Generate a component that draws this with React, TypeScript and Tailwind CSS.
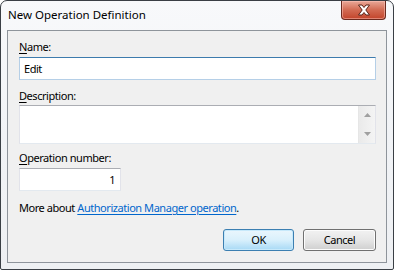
import React from "react";

const font = { fontFamily: '"Noto Sans", "Liberation Sans", sans-serif' };

function CloseGlyph() {
  return (
    <svg width="14" height="12" viewBox="0 0 14 12">
      <path
        d="M1.5 1 H5 L7 3.5 L9 1 H12.5 L8.8 6 L12.5 11 H9 L7 8.5 L5 11 H1.5 L5.2 6 Z"
        fill="#ffffff"
        stroke="#5a2418"
        strokeWidth="1"
        strokeLinejoin="round"
      />
    </svg>
  );
}

export default function App() {
  return (
    <div className="w-[394px] h-[270px] bg-white" style={font}>
      <div className="relative w-[394px] h-[270px] border border-[#3a3f45] rounded-t-[7px] rounded-b-[2px] bg-gradient-to-b from-[#f8f9fb] via-[#f1f3f6] to-[#eef0f3] flex flex-col text-[11px] tracking-[-0.45px] text-black">
        <div className="h-[29px] flex items-start pl-[7px] pt-[6px] text-[11.5px] tracking-normal leading-[16px] text-[#000]">
          New Operation Definition
        </div>
        <div className="absolute right-[7px] top-0 w-[45px] h-[19px] rounded-b-[4px] border border-t-0 border-[#6b2a1e] bg-gradient-to-b from-[#e9a898] via-[#d26a52] to-[#c2432a] flex items-center justify-center shadow-[inset_0_0_0_1px_rgba(255,200,190,0.5)]">
          <CloseGlyph />
        </div>
        <div className="mx-[6px] mb-[6px] flex-1 border border-[#8e949b] bg-[#f0f0f0] flex flex-col pl-[11px] pr-[10px] pt-[8px] pb-[11px]">
          <div className="leading-[16px] h-[16px]">
            <span className="underline underline-offset-2">N</span>ame:
          </div>
          <div className="mt-[2px] h-[23px] bg-white border border-[#b5cfe7] border-t-[#3d7bad] flex items-center pl-[4px] leading-[16px]">
            Edit
          </div>
          <div className="mt-[8px] leading-[16px] h-[16px]">
            <span className="underline underline-offset-2">D</span>escription:
          </div>
          <div className="mt-[1px] h-[39px] bg-white border border-[#e2e3ea] border-t-[#abadb3] border-b-[#e3e9ef] flex justify-end">
            <div className="w-[17px] h-full bg-gradient-to-r from-[#eaeaea] to-[#f4f4f4] border-l border-[#e6e6e6] flex flex-col items-center justify-between py-[7px]">
              <svg width="7" height="4" viewBox="0 0 7 4"><path d="M0 4 L3.5 0 L7 4 Z" fill="#a0a0a0" /></svg>
              <svg width="7" height="4" viewBox="0 0 7 4"><path d="M0 0 L3.5 4 L7 0 Z" fill="#a0a0a0" /></svg>
            </div>
          </div>
          <div className="mt-[6px] leading-[16px] h-[16px]">
            <span className="underline underline-offset-2">O</span>peration number:
          </div>
          <div className="mt-[2px] w-[102px] h-[23px] bg-white border border-[#e2e3ea] border-t-[#abadb3] border-b-[#e3e9ef] flex items-center justify-end pr-[5px] leading-[16px]">
            1
          </div>
          <div className="mt-[9px] leading-[16px] h-[16px]">
            More about{" "}
            <span className="text-[#0066cc] underline underline-offset-2">Authorization Manager operation</span>.
          </div>
          <div className="mt-auto flex justify-end gap-[9px]">
            <div className="w-[71px] h-[22px] rounded-[3px] border border-[#3c7fb1] bg-gradient-to-b from-[#eaf6fd] via-[#d9f0fc] to-[#a7d9f5] shadow-[inset_0_0_0_1px_#c7e9fb] flex items-center justify-center leading-[16px]">
              OK
            </div>
            <div className="w-[73px] h-[22px] rounded-[3px] border border-[#707070] bg-gradient-to-b from-[#f2f2f2] via-[#e6e6e6] to-[#cfcfcf] shadow-[inset_0_0_0_1px_#fcfcfc] flex items-center justify-center leading-[16px]">
              Cancel
            </div>
          </div>
        </div>
      </div>
    </div>
  );
}
